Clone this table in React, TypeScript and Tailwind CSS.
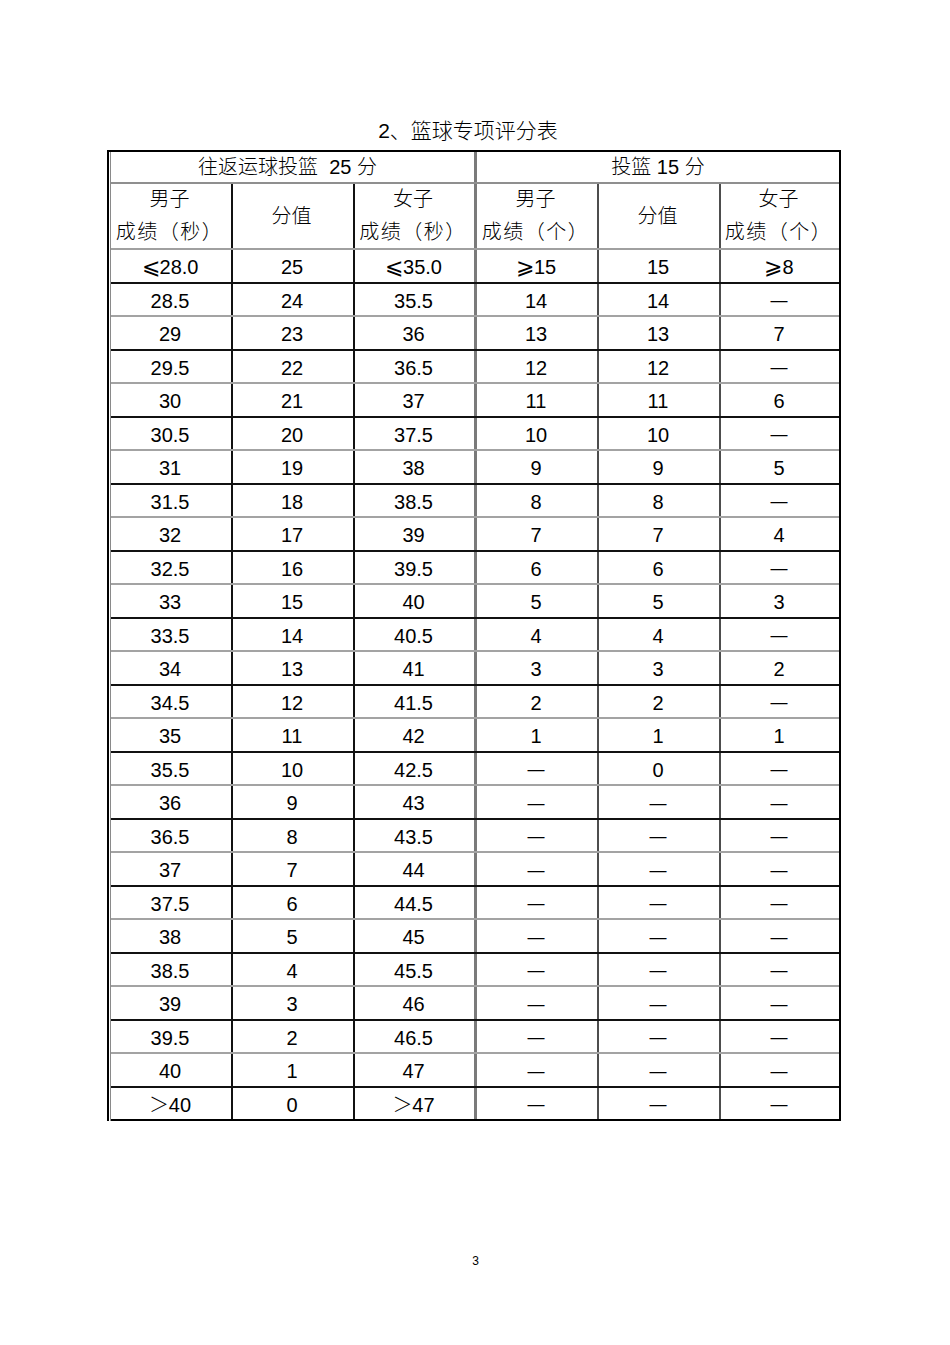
import React from "react";

const FONT = { fontFamily: '"Liberation Sans", "Noto Sans CJK SC", sans-serif' };
const DASH = "—";

function half(base: number, i: number) {
  const v = base + i * 0.5;
  return Number.isInteger(v) ? String(v) : v.toFixed(1);
}

const rows = Array.from({ length: 26 }, (_, i) => {
  const menSec = i === 0 ? "⩽28.0" : i === 25 ? "＞40" : half(28, i);
  const womenSec = i === 0 ? "⩽35.0" : i === 25 ? "＞47" : half(35, i);
  const menShot = i === 0 ? "⩾15" : i <= 14 ? String(15 - i) : DASH;
  const shotScore = i <= 15 ? String(15 - i) : DASH;
  const womenShot = i === 0 ? "⩾8" : i <= 14 && i % 2 === 0 ? String(8 - i / 2) : DASH;
  return [menSec, String(25 - i), womenSec, menShot, shotScore, womenShot];
});

const colBorder = [
  "w-[122px] border-r-2 border-[#111]",
  "w-[122px] border-r-2 border-[#111]",
  "w-[122px] border-r-[3px] border-[#7a7a7a]",
  "w-[122px] border-r-2 border-[#4d4d4d]",
  "w-[122px] border-r-2 border-[#4d4d4d]",
  "w-[118px]",
];

function Cell({ text }: { text: string }) {
  if (text === DASH) {
    return <span className="text-[17px] leading-none">—</span>;
  }
  if (text.startsWith("⩽") || text.startsWith("⩾")) {
    return (
      <span>
        <span className="text-[22px] leading-none font-extralight" style={{ fontFamily: '"DejaVu Sans", sans-serif' }}>{text[0]}</span>
        {text.slice(1)}
      </span>
    );
  }
  return <span>{text}</span>;
}

export default function App() {
  return (
    <div className="w-[950px] min-h-[1345px] bg-white text-black font-light" style={FONT}>
      <div className="pt-[119px] h-[143px] pr-[14px] text-center text-[21px] leading-[24px]">2、篮球专项评分表</div>

      <div className="mt-[7px] ml-[107px] w-[734px] border-t-2 border-l-2 border-r-2 border-black pl-[1px]">
        <div className="border-l border-[#8a8a8a]">
          <div className="flex h-[32px] text-[20px] border-b-2 border-[#8f8f8f]">
            <div className="w-[366px] flex items-center justify-center border-r-[3px] border-[#7a7a7a] pr-[10px]">
              往返运球投篮&nbsp;&nbsp;25 分
            </div>
            <div className="w-[362px] flex items-center justify-center">投篮 15 分</div>
          </div>

          <div className="flex h-[66px] text-[20px] leading-[33px] border-b-2 border-[#a0a0a0]">
            {[
              ["男子", "成绩（秒）"],
              ["分值"],
              ["女子", "成绩（秒）"],
              ["男子", "成绩（个）"],
              ["分值"],
              ["女子", "成绩（个）"],
            ].map((lines, c) => (
              <div key={c} className={`${colBorder[c]} flex flex-col items-center justify-center pr-[3px]`}>
                {lines.map((l) => (
                  <div key={l} className={l.length > 2 ? "tracking-[1.5px]" : ""}>{l}</div>
                ))}
              </div>
            ))}
          </div>

          {rows.map((row, i) => (
            <div
              key={i}
              className={`flex h-[33.5px] text-[20px] ${
                i === 25 ? "border-b-2 border-black" : i % 2 === 0 ? "border-b-2 border-[#111]" : "border-b-2 border-[#a3a3a3]"
              }`}
            >
              {row.map((text, c) => (
                <div key={c} className={`${colBorder[c]} flex items-center justify-center pt-[3px] pr-[2px]`}>
                  <Cell text={text} />
                </div>
              ))}
            </div>
          ))}
        </div>
      </div>

      <div className="mt-[133px] text-center text-[12px] leading-[14px] pl-[1px]">3</div>
    </div>
  );
}
